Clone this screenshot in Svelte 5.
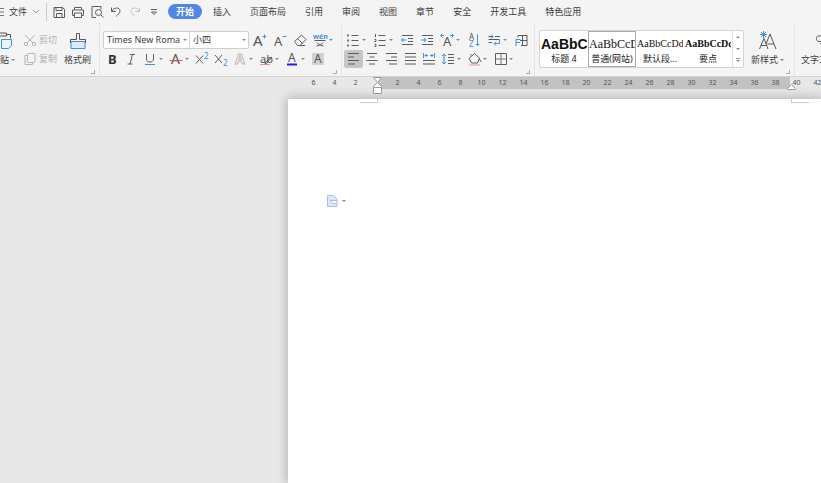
<script>
	const tabs = ['开始', '插入', '页面布局', '引用', '审阅', '视图', '章节', '安全', '开发工具', '特色应用'];

	const blue = '#3f8fdc';

	// inner markup of 18x16 toolbar icons
	const icons = {
		save: `<path d="M4 3.500h8.500l2 2v8H4zM6 3.500v3h6v-3M6.500 13.500v-4h5.500v4"/>`,
		print: `<path d="M5.500 6V3.500h7V6M5.500 11.500H3.500V6h11v5.500h-2M5.500 9h7v4.500h-7z"/>`,
		preview: `<path d="M8 13.500H4v-11h9v3"/><circle cx="10.500" cy="8.500" r="3"/><path d="M12.500 10.500l3 3"/>`,
		undo: `<path d="M4.500 3.500v4h4M5 7c2-4 8-4 8 0 0 2-2 3.500-4 5.500"/>`,
		redo: `<path stroke="#c4c4c4" d="M13.500 3.500v4h-4M13 7c-2-4-8-4-8 0 0 2 2 3.500 4 5.500"/>`,
		more: `<path d="M6 5.500h6M6.500 8h5L9 10.500z"/>`,
		cut: `<g stroke="#b5b5b5"><path d="M4 3l8 8M14 3l-8 8"/><circle cx="5" cy="12" r="1.700"/><circle cx="13" cy="12" r="1.700"/></g>`,
		copy: `<g stroke="#b5b5b5"><rect x="6.500" y="2.500" width="7.500" height="9" rx="1"/><path d="M6 4.500H4v9h7.500v-2"/></g>`,
		grow: `<text x="2" y="13.500" font-size="15">A</text><path stroke="${blue}" d="M11.500 4.500h4M13.500 2.500v4"/>`,
		shrink: `<text x="3" y="13.500" font-size="13">A</text><path stroke="${blue}" d="M11.500 4.500h4"/>`,
		eraser: `<path d="M3.500 9.500l7-6.500 4.500 4.500-6 6H6.500zM6.500 6.500l5 5M8 13.500h6"/>`,
		pinyin: `<text x="2" y="7" font-size="7" font-weight="bold" fill="${blue}">wén</text><path d="M3.500 8.500h11M6 10.500c1 2 4 3 6.500 3.500M12 10.500c-1 2-4 3-6.500 3.500"/>`,
		bold: `<text x="5" y="12.500" font-size="13" font-weight="bold" fill="#333">B</text>`,
		italic: `<path d="M8 3.500h5M5.500 13h5M10.500 3.500l-2.500 9.500"/>`,
		underline: `<path d="M5.500 3v5c0 4 7 4 7 0V3"/><path stroke="${blue}" d="M4 13.500h10"/>`,
		strike: `<text x="4" y="13" font-size="14">A</text><path stroke="#d9534f" d="M2.500 9.500h13"/>`,
		sup: `<path d="M3 4.500l7 8M10 4.500l-7 8"/><text x="11" y="7.500" font-size="8" fill="${blue}">2</text>`,
		sub: `<path d="M3 4l7 8M10 4l-7 8"/><text x="11" y="14.500" font-size="8" fill="${blue}">2</text>`,
		effect: `<text x="4" y="13" font-size="14" fill="#f4f4f4" stroke="#b5b5b5" stroke-width=".8" font-weight="bold">A</text>`,
		mark: `<text x="3" y="12" font-size="11">ab</text><path stroke="#d99a9a" d="M3 13.500h10"/><path d="M15 6l-5 6-2 1 .5-2z"/>`,
		color: `<text x="5" y="11" font-size="12">A</text><path stroke="#1a1aff" stroke-width="2" d="M4 13.500h10"/>`,
		shade: `<path fill="#d2d2d2" stroke="none" d="M3 2h12v12H3z"/><text x="5" y="12" font-size="12">A</text>`,
		bullets: `<path d="M7.500 3.500h7M7.500 8.500h7M7.500 13.500h7"/><path stroke="#777" stroke-width="2" d="M3 3.500h2M3 8.500h2M3 13.500h2"/>`,
		numbers: `<path d="M7.500 3.500h7M7.500 8.500h7M7.500 13.500h7M4.500 2v3M3.500 7.500h1.500v2h-1.500M3.500 12.500h1.500v2h-1.500"/>`,
		outdent: `<path d="M4 3.500h11M10 6.500h5M10 9.500h5M4 12.500h11"/><path stroke="${blue}" d="M8.500 8H3.500M5.500 6L3.500 8l2 2"/>`,
		indent: `<path d="M4 3.500h11M10 6.500h5M10 9.500h5M4 12.500h11"/><path stroke="${blue}" d="M3 8h5M6 6l2 2-2 2"/>`,
		scale: `<text x="5" y="14" font-size="13">A</text><path stroke="${blue}" d="M6 3.500H2.500M4.500 1.500l-2 2 2 2M12 3.500h3.500M13.500 1.500l2 2-2 2"/>`,
		sort: `<text x="4" y="7.500" font-size="8">A</text><text x="4" y="14.500" font-size="8" fill="${blue}">Z</text><path stroke="${blue}" d="M12.500 2.500v11M11 12l1.500 1.500L14.500 12"/>`,
		wrap: `<path d="M3.500 4.500H8M10 4.500h5M3.500 7.500h11M3.500 10.500H7"/><path stroke="${blue}" d="M6 2.500l2 2-2 2M14.500 8v3.500H9.500M11 9.500l-2 2 2 2"/>`,
		tabs: `<path d="M6 3.500h9v10H9M10.500 3.500v10M8 8.500h7M6 3.500v2"/><path stroke="${blue}" d="M4 14V7.500h4.500M4 10.500h4"/>`,
		left: `<path d="M4 2.500h11M4 6h6M4 9.500h11M4 13h7"/>`,
		center: `<path d="M4 2.500h10M6.500 6h5M3.500 9.500h11M6 13h6"/>`,
		right: `<path d="M4 2.500h11M9 6h6M4 9.500h11M7 13h8"/>`,
		justify: `<path d="M4 2.500h11M4 6h11M4 9.500h11M4 13h11"/>`,
		distribute: `<path d="M3 9.500h12M3 13h12"/><path stroke="${blue}" d="M3.500 2v5M14.500 2v5M5 4.500h3M6.500 3L5 4.500 6.500 6M10 4.500h3M11.500 3L13 4.500 11.500 6"/>`,
		spacing: `<path d="M9 3.500h6M9 6.500h6M9 9.500h6M9 12.500h6"/><path stroke="${blue}" d="M5 3v10M3 5l2-2 2 2M3 11l2 2 2-2"/>`,
		fill: `<path d="M4 7.500L9.500 2.500 14.500 7l-2 5h-6zM6 4.500V3M14.500 8l1.500 3"/><path stroke="#d99a9a" d="M4 14h11"/>`,
		border: `<path d="M4.500 2.500h11v11h-11z"/><path stroke="#777" d="M10 3v10M4.500 8h11"/>`
	};

	const quick = [
		['save', '保存'],
		['print', '打印'],
		['preview', '打印预览'],
		['undo', '撤销'],
		['redo', '恢复'],
		['more', '自定义快速访问工具栏']
	];

	// [icon, label, has a drop-down]
	const fontTop = [
		['grow', '增大字号'],
		['shrink', '减小字号'],
		['eraser', '清除格式'],
		['pinyin', '拼音指南', true]
	];
	const fontBottom = [
		['bold', '加粗'],
		['italic', '倾斜'],
		['underline', '下划线', true],
		['strike', '删除线', true],
		['sup', '上标'],
		['sub', '下标'],
		['effect', '文字效果', true],
		['mark', '突出显示', true],
		['color', '字体颜色', true],
		['shade', '字符底纹']
	];
	const paraTop = [
		['bullets', '项目符号', true],
		['numbers', '编号', true],
		['outdent', '减少缩进量'],
		['indent', '增加缩进量'],
		['scale', '中文版式', true],
		['sort', '排序'],
		['wrap', '显示段落标记', true],
		['tabs', '制表位']
	];
	const paraBottom = [
		['left', '左对齐'],
		['center', '居中对齐'],
		['right', '右对齐'],
		['justify', '两端对齐'],
		['distribute', '分散对齐'],
		['spacing', '行距', true],
		['fill', '底纹颜色', true],
		['border', '边框', true]
	];

	const styles = [
		{ name: '标题 4', sample: 'AaBbC', kind: 'heading' },
		{ name: '普通(网站)', sample: 'AaBbCcD', kind: 'web' },
		{ name: '默认段...', sample: 'AaBbCcDd', kind: 'plain' },
		{ name: '要点', sample: 'AaBbCcDd', kind: 'strong' }
	];

	const ticks = [-6, -4, -2, 0, ...Array.from({ length: 21 }, (_, i) => (i + 1) * 2)];

	let align = $state('left');
	let style = $state('普通(网站)');
	let tab = $state('开始');
</script>

{#snippet icon(name)}
	<svg class="icon" width="18" height="16" viewBox="0 0 18 16" aria-hidden="true">{@html icons[name]}</svg>
{/snippet}

{#snippet tools(list)}
	{#each list as [name, label, menu]}
		<button
			class="tool"
			class:menu
			class:active={name === align}
			aria-label={label}
			onclick={() => paraBottom.slice(0, 5).some((p) => p[0] === name) && (align = name)}
		>
			{@render icon(name)}
			{#if menu}<i class="caret"></i>{/if}
		</button>
	{/each}
{/snippet}

{#snippet corner(label)}
	<button class="corner" aria-label={label}></button>
{/snippet}

<div class="app">
	<header>
		<button class="file">
			<svg width="6" height="8" viewBox="0 0 6 8"><path d="M0 .5h6M0 4h6M0 7.500h6" stroke="#777" /></svg>
			文件
			<svg width="8" height="6" viewBox="0 0 8 6"><path d="M1 1l3 3 3-3" fill="none" stroke="#999" /></svg>
		</button>
		<div class="quick">
			{#each quick as [name, label]}
				<button class="tool" aria-label={label}>{@render icon(name)}</button>
			{/each}
		</div>
		<nav>
			{#each tabs as t}
				<button class:current={t === tab} onclick={() => (tab = t)}>{t}</button>
			{/each}
		</nav>
	</header>

	<div class="ribbon">
		<section class="clipboard">
			<button class="large paste">
				<svg width="26" height="20" viewBox="0 0 26 20" fill="none" stroke="#555">
					<path d="M10 17.500H5.500v-14h4M16 3.500h4.500v4M9.500 2h7v3h-7z" />
					<path d="M11.500 8.500h10v6l-3 3h-7z" fill="#eaf3fc" stroke="#3f8fdc" />
				</svg>
				<span>粘贴<i class="caret"></i></span>
			</button>
			<div class="pair">
				<button disabled>{@render icon('cut')}剪切</button>
				<button disabled>{@render icon('copy')}复制</button>
			</div>
			<button class="large">
				<svg width="20" height="20" viewBox="0 0 20 20" fill="none" stroke="#555">
					<path d="M3 17.500v-7h14v7z" fill="#dcebfa" stroke="#3f8fdc" />
					<path d="M2.500 12V8.500h6v-6h3v6h6V12" />
				</svg>
				<span>格式刷</span>
			</button>
			{@render corner('剪贴板')}
		</section>

		<section class="font">
			<div class="row">
				<div class="combo">
					<label class="family">
						<select aria-label="字体"><option>Times New Roman</option></select>
						<i class="caret"></i>
					</label>
					<label class="size">
						<select aria-label="字号"><option>小四</option></select>
						<i class="caret"></i>
					</label>
				</div>
				<div class="spaced">{@render tools(fontTop)}</div>
			</div>
			<div class="row">{@render tools(fontBottom)}</div>
			{@render corner('字体设置')}
		</section>

		<section class="para">
			<div class="row spaced">{@render tools(paraTop)}</div>
			<div class="row">{@render tools(paraBottom)}</div>
			{@render corner('段落设置')}
		</section>

		<section class="style">
			<div class="gallery">
				{#each styles as s}
					<button class="tile" class:selected={s.name === style} onclick={() => (style = s.name)}>
						<span class="sample {s.kind}">{s.sample}</span>
						<span>{s.name}</span>
					</button>
				{/each}
				<div class="scroll">
					<button aria-label="上一行"><i class="caret up"></i></button>
					<button aria-label="下一行"><i class="caret"></i></button>
					<button class="all" aria-label="更多样式"><i class="caret"></i></button>
				</div>
			</div>
			<button class="large new">
				<svg width="22" height="20" viewBox="0 0 22 20" fill="none" stroke="#555">
					<path d="M2.500 18L7 7.500 11 18M4 14.500h5.500M9 13l4-10 6 15M10.500 13h6.500" />
					<path stroke="#3f8fdc" d="M6.500 0v7M3 3.500h7M4 1l5 5M9 1L4 6" />
				</svg>
				<span>新样式<i class="caret"></i></span>
			</button>
			{@render corner('样式设置')}
		</section>

		<section class="text">
			<button class="large">
				<svg width="26" height="20" viewBox="0 0 26 20" fill="none" stroke="#555">
					<path d="M14 5c-4-1-5 5-1 5.500h6c4-.5 3-6-1-5.500M17 2l-2.500 3 3 2.500M14 13l4-3" />
				</svg>
				<span>文字工具</span>
			</button>
		</section>
	</div>

	<div class="ruler">
		<div class="ticks">
			{#each ticks as n}
				<span class:inside={n > 0 && n < 40}>{n ? Math.abs(n) : ''}</span>
			{/each}
		</div>
		<svg class="indent-left" width="9" height="17" viewBox="0 0 9 17" fill="#fff" stroke="#999">
			<path d="M.5 .5h8L4.500 5.500zM4.500 5.500l4 4v7h-8v-7zM.5 10.500h8" />
		</svg>
		<svg class="indent-right" width="9" height="6" viewBox="0 0 9 6" fill="#fff" stroke="#999">
			<path d="M4.500 .5l4 4v1h-8v-1z" />
		</svg>
	</div>

	<main>
		<article>
			<div class="margins"><i></i><i></i></div>
			<button class="options" aria-label="粘贴选项">
				<svg width="11" height="12" viewBox="0 0 11 12" fill="#dce6f7" stroke="#a9bfe6">
					<path d="M.5 .5h6l3.500 3.500v7.500H.5z" />
					<path d="M3.500 5.500h6.500v3H6z" fill="#fff" />
				</svg>
				<i class="caret"></i>
			</button>
		</article>
	</main>
</div>

<style>
	:global(body) {
		margin: 0;
	}

	.app {
		display: flex;
		flex-direction: column;
		min-height: 100vh;
		overflow: hidden;
		background: #e8e8e8;
		color: #3c3c3c;
		font: 9px/12px 'Noto Sans', 'Noto Sans CJK SC', sans-serif;
	}

	button,
	select {
		padding: 0;
		border: 0;
		background: none;
		color: inherit;
		font: inherit;
		white-space: nowrap;
	}

	svg {
		display: block;
		flex: none;
	}

	.icon {
		fill: none;
		stroke: #5c5c5c;
	}

	.icon :global(text) {
		font-family: 'Noto Sans', sans-serif;
	}

	.icon :global(text:not([fill])) {
		fill: #555;
	}

	.icon :global(text:not([stroke])) {
		stroke: none;
	}

	.caret {
		display: inline-block;
		flex: none;
		width: 0;
		height: 0;
		border: 2px solid transparent;
		border-top-color: #888;
		border-bottom: 0;
	}

	.caret.up {
		transform: rotate(180deg);
	}

	header {
		display: flex;
		align-items: center;
		height: 23px;
		background: #f4f4f4;
	}

	.file {
		display: flex;
		align-items: center;
		gap: 5px;
		height: 18px;
		margin-left: -2px;
		padding-right: 6px;
		border-right: 1px solid #ccc;
	}

	.quick {
		display: flex;
		margin-left: 3px;
	}

	nav {
		display: flex;
		align-items: center;
		gap: 19px;
		margin-left: 4px;
	}

	nav .current {
		height: 15px;
		margin-right: -8px;
		padding: 0 8px;
		border-radius: 8px;
		background: #4f87e5;
		color: #fff;
		font-weight: bold;
	}

	.ribbon {
		display: flex;
		height: 53px;
		background: #f4f4f4;
		border-bottom: 1px solid #d4d4d4;
	}

	section {
		position: relative;
		flex: none;
		box-sizing: border-box;
		padding: 7px 2px 0;
		border-right: 1px solid #e4e4e4;
	}

	.corner {
		position: absolute;
		right: 4px;
		bottom: 2px;
		width: 4px;
		height: 4px;
		border: solid #aaa;
		border-width: 0 1px 1px 0;
	}

	.row,
	.spaced {
		display: flex;
		align-items: center;
		height: 19px;
	}

	.spaced {
		gap: 1px;
	}

	.tool {
		display: flex;
		align-items: center;
		flex: none;
		width: 19px;
		height: 18px;
	}

	.tool.menu {
		width: 26px;
	}

	.tool.active {
		border-radius: 2px;
		background: #c6c6c6;
	}

	.large {
		display: flex;
		flex-direction: column;
		align-items: center;
		gap: 3px;
		padding-top: 1px;
	}

	.large span {
		display: flex;
		align-items: center;
		gap: 2px;
	}

	.clipboard {
		display: flex;
		align-items: flex-start;
		width: 110px;
		margin-left: -10px;
		padding-left: 0;
	}

	.pair button {
		display: flex;
		align-items: center;
		height: 19px;
		color: #b0b0b0;
	}

	.pair {
		margin: 0 7px 0 5px;
	}

	.font {
		width: 242px;
		padding-left: 3px;
	}

	.combo {
		display: flex;
		flex: none;
		margin-right: 2px;
		border: 1px solid #d0d0d0;
		border-radius: 2px;
		background: #fff;
	}

	.combo label {
		display: flex;
		align-items: center;
		box-sizing: border-box;
		height: 16px;
		padding: 0 2px 0 3px;
	}

	.combo select {
		flex: 1;
		min-width: 0;
		appearance: none;
		text-overflow: clip;
	}

	.family {
		width: 86px;
		border-right: 1px solid #d8d8d8;
	}

	.family select {
		margin-right: 3px;
	}

	.size {
		width: 58px;
	}

	.para {
		width: 193px;
	}

	.style {
		display: flex;
		align-items: flex-start;
		width: 260px;
		padding-left: 4px;
	}

	.gallery {
		display: flex;
		box-sizing: border-box;
		height: 38px;
		border: 1px solid #d4d4d4;
		border-radius: 2px;
		background: #fff;
	}

	.tile {
		display: flex;
		flex-direction: column;
		align-items: center;
		box-sizing: border-box;
		width: 48px;
		padding-top: 3px;
		border: 1px solid transparent;
		overflow: hidden;
		color: #222;
	}

	.tile.selected {
		border: 1px solid #aaa;
	}

	.sample {
		width: 46px;
		height: 18px;
		overflow: hidden;
		color: #111;
		font: 10px/18px 'Liberation Serif', serif;
		text-align: left;
	}

	.heading {
		font: bold 14px/18px 'Liberation Sans', sans-serif;
	}

	.web {
		font-size: 12px;
	}

	.strong {
		font-weight: bold;
	}

	.scroll {
		display: flex;
		flex-direction: column;
		width: 10px;
		border-left: 1px solid #e2e2e2;
	}

	.scroll button {
		display: flex;
		flex: 1;
		align-items: center;
		justify-content: center;
	}

	.all .caret {
		position: relative;
	}

	.all .caret::before {
		content: '';
		position: absolute;
		left: -2px;
		top: -4px;
		width: 4px;
		height: 1px;
		background: #999;
	}

	.new {
		margin-left: 7px;
	}

	.text {
		padding-left: 6px;
		border: 0;
	}

	.ruler {
		position: relative;
		height: 12px;
		font-size: 7px;
		line-height: 11px;
	}

	.ticks {
		display: flex;
		padding-left: 303px;
	}

	.ticks span {
		flex: none;
		box-sizing: border-box;
		width: 21px;
		height: 12px;
		color: #555;
		text-align: center;
	}

	.ticks .inside {
		background: #c2c2c2;
	}

	/* the text area starts at the zero mark, half a cell before the first number */
	.ticks span:nth-child(4) {
		background: linear-gradient(90deg, transparent 50%, #c2c2c2 50%);
	}

	.ticks span:nth-child(24) {
		background: linear-gradient(90deg, #c2c2c2 20%, transparent 20%);
	}

	.indent-left {
		position: absolute;
		left: 373px;
		top: 0;
		z-index: 1;
	}

	.indent-right {
		position: absolute;
		left: 787px;
		top: 7px;
	}

	main {
		display: flex;
		flex: 1;
		padding: 10px 0 0 288px;
	}

	article {
		flex: 1;
		background: #fff;
		box-shadow: 0 0 10px 2px #b8b8b8;
	}

	.margins {
		display: flex;
		justify-content: space-between;
		height: 4px;
		padding: 0 12px 0 72px;
	}

	.margins i {
		width: 17px;
		border: solid #ccc;
		border-width: 0 1px 1px 0;
	}

	.margins i:last-child {
		border-width: 0 0 1px 1px;
	}

	.options {
		display: flex;
		align-items: center;
		gap: 4px;
		margin: 92px 0 0 39px;
	}
</style>
